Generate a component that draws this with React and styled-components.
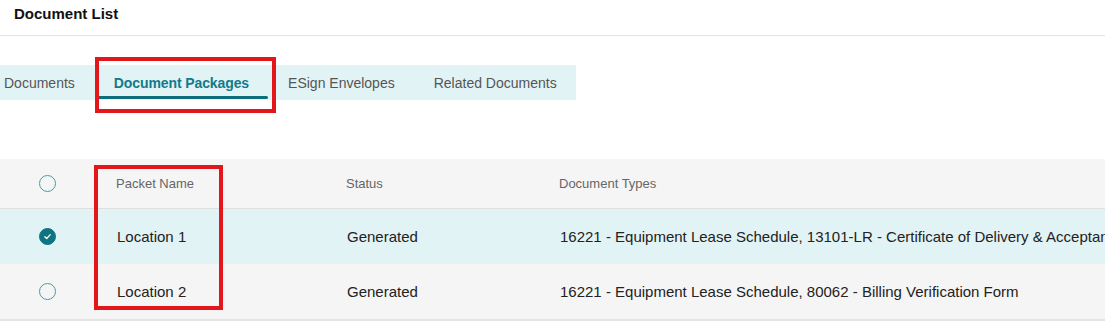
import React, { useState } from 'react';
import styled, { createGlobalStyle } from 'styled-components';

const GlobalStyle = createGlobalStyle`
  html, body {
    margin: 0;
    padding: 0;
    background: #ffffff;
    font-family: 'Liberation Sans', Arial, sans-serif;
    overflow: hidden;
  }
`;

const TEAL = '#117a8b';
const RED = '#e3161b';

const StyledPage = styled.div`
  width: 1105px;
  height: 336px;
  overflow: hidden;
  position: relative;
`;

const StyledHeader = styled.div`
  padding: 5px 14px 12px;
  border-bottom: 1px solid #e2e2e2;
`;

const StyledTitle = styled.h1`
  margin: 0;
  font-size: 15px;
  line-height: 18px;
  font-weight: 700;
  color: #111;
`;

const StyledTabBar = styled.div`
  display: inline-flex;
  height: 35px;
  margin-top: 29px;
  background: #e2f3f5;
`;

const StyledTab = styled.button`
  position: relative;
  border: 0;
  background: transparent;
  font-family: inherit;
  font-size: 14px;
  font-weight: ${({ active }) => (active ? 700 : 400)};
  letter-spacing: ${({ active }) => (active ? '-0.1px' : '0')};
  color: ${({ active }) => (active ? TEAL : '#555')};
  padding: 0 19.5px;
  height: 100%;
  white-space: nowrap;
  cursor: pointer;

  &:first-child {
    padding-left: 4px;
  }

  ${({ active }) =>
    active &&
    `
    &::after {
      content: '';
      position: absolute;
      left: 5px;
      right: 1px;
      bottom: 1px;
      height: 3px;
      border-radius: 0 3px 3px 0;
      background: #0d6d7b;
    }
  `}
`;

const StyledHighlight = styled.div`
  position: absolute;
  border: 4px solid ${RED};
  box-sizing: border-box;
  pointer-events: none;
`;

const StyledTable = styled.div`
  position: relative;
  margin-top: 59px;
  border-bottom: 2px solid #e4e4e4;
`;

const StyledRow = styled.div`
  display: grid;
  grid-template-columns: 100px 230px 213px 1fr;
  align-items: center;
  height: ${({ head }) => (head ? '49px' : '55px')};
  background: ${({ selected }) => (selected ? '#e2f3f5' : '#f5f5f5')};
  border-bottom: ${({ head }) => (head ? '1px solid #dedede' : '0')};
`;

const StyledCell = styled.div`
  padding-left: ${({ head }) => (head ? '16px' : '17px')};
  font-size: ${({ head }) => (head ? '13px' : '15px')};
  color: ${({ head }) => (head ? '#666' : '#222')};
  white-space: nowrap;
`;

const StyledCheckCell = styled.div`
  display: flex;
  justify-content: center;
  padding-right: 6px;
`;

const StyledRadio = styled.span`
  width: 17px;
  height: 17px;
  box-sizing: border-box;
  border-radius: 50%;
  border: 1.5px solid ${({ checked }) => (checked ? '#0f7482' : '#3f9ead')};
  background: ${({ checked }) => (checked ? '#0f7482' : 'transparent')};
  display: flex;
  align-items: center;
  justify-content: center;
`;

const Radio = ({ checked }) => (
  <StyledRadio checked={checked}>
    {checked && (
      <svg width="9" height="9" viewBox="0 0 10 10">
        <path
          d="M2 5.2 L4.2 7.2 L8 3"
          fill="none"
          stroke="#ffffff"
          strokeWidth="1.4"
          strokeLinecap="round"
          strokeLinejoin="round"
        />
      </svg>
    )}
  </StyledRadio>
);

const tabs = ['Documents', 'Document Packages', 'ESign Envelopes', 'Related Documents'];

const packages = [
  {
    id: 1,
    name: 'Location 1',
    status: 'Generated',
    types:
      '16221 - Equipment Lease Schedule, 13101-LR - Certificate of Delivery & Acceptance',
  },
  {
    id: 2,
    name: 'Location 2',
    status: 'Generated',
    types: '16221 - Equipment Lease Schedule, 80062 - Billing Verification Form',
  },
];

const App = () => {
  const [activeTab, setActiveTab] = useState(1);
  const [selected, setSelected] = useState(1);

  return (
    <StyledPage>
      <GlobalStyle />
      <StyledHeader>
        <StyledTitle>Document List</StyledTitle>
      </StyledHeader>

      <StyledTabBar>
        {tabs.map((tab, i) => (
          <StyledTab
            key={tab}
            active={i === activeTab}
            onClick={() => setActiveTab(i)}
            type="button"
          >
            {tab}
            {i === 1 && (
              <StyledHighlight style={{ left: 1, top: -8, width: 181, height: 56 }} />
            )}
          </StyledTab>
        ))}
      </StyledTabBar>

      <StyledTable>
        <StyledRow head>
          <StyledCheckCell>
            <Radio checked={false} />
          </StyledCheckCell>
          <StyledCell head>Packet Name</StyledCell>
          <StyledCell head>Status</StyledCell>
          <StyledCell head>Document Types</StyledCell>
        </StyledRow>

        {packages.map((pkg) => (
          <StyledRow
            key={pkg.id}
            selected={selected === pkg.id}
            onClick={() => setSelected(pkg.id)}
          >
            <StyledCheckCell>
              <Radio checked={selected === pkg.id} />
            </StyledCheckCell>
            <StyledCell>{pkg.name}</StyledCell>
            <StyledCell>{pkg.status}</StyledCell>
            <StyledCell>{pkg.types}</StyledCell>
          </StyledRow>
        ))}

        <StyledHighlight style={{ left: 94, top: 6, width: 129, height: 145 }} />
      </StyledTable>
    </StyledPage>
  );
};

export default App;
